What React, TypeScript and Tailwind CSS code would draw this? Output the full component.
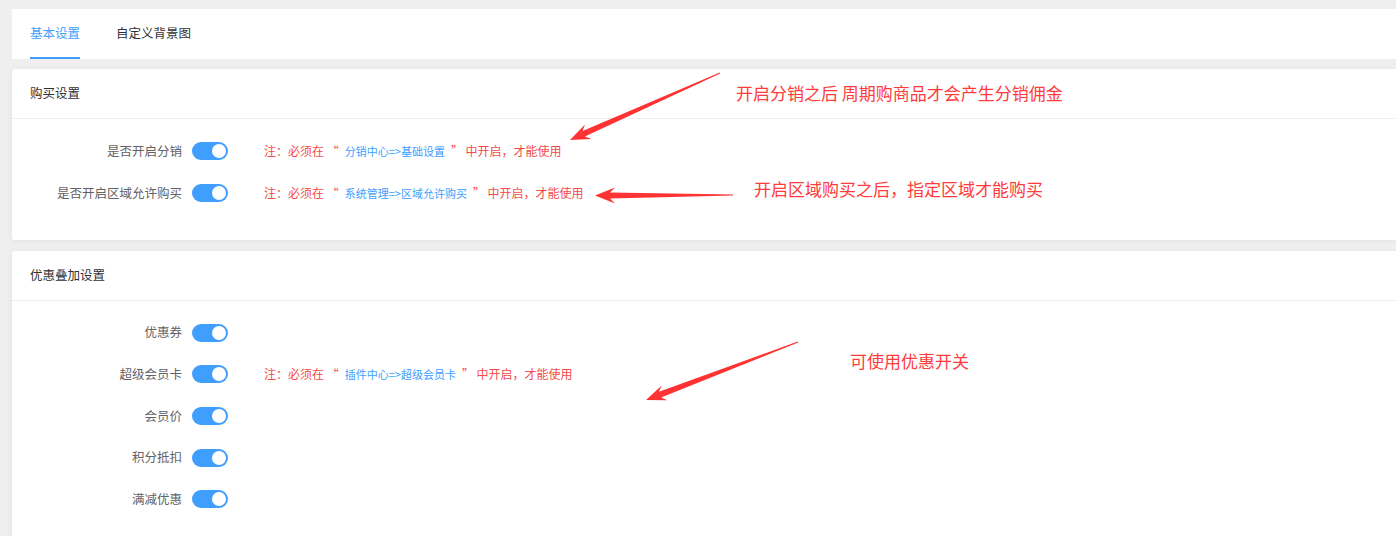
import React from "react";

const FONT = { fontFamily: '"Noto Sans CJK SC", "Noto Sans", sans-serif' };

type Pt = [number, number];

// tapered red arrow like a screenshot-tool annotation
function arrowPoints(tail: Pt, tip: Pt) {
  const dx = tip[0] - tail[0];
  const dy = tip[1] - tail[1];
  const len = Math.hypot(dx, dy);
  const ux = dx / len;
  const uy = dy / len;
  const nx = -uy;
  const ny = ux;
  const at = (s: number, w: number): string =>
    `${(tail[0] + ux * s + nx * w).toFixed(1)},${(tail[1] + uy * s + ny * w).toFixed(1)}`;
  return [
    at(0, 0.6),
    at(len - 15, 3),
    at(len - 20, 8),
    at(len, 0),
    at(len - 20, -8),
    at(len - 15, -3),
    at(0, -0.6),
  ].join(" ");
}

const Switch = () => (
  <div className="w-[36px] h-[18px] rounded-full bg-[#409eff] flex items-center justify-end pr-[2px] shrink-0">
    <div className="w-[14px] h-[14px] rounded-full bg-white" />
  </div>
);

const Note = ({ path }: { path: string }) => (
  <div className="ml-[36px] text-[12px] text-[#f54a4a] whitespace-nowrap flex items-center">
    <span>注：必须在 “</span>
    <span className="text-[11px] text-[#409eff] mx-[6px]">{path}</span>
    <span>” 中开启，才能使用</span>
  </div>
);

const Row = ({ label, note, h }: { label: string; note?: string; h: string }) => (
  <div className={h + " flex items-center"}>
    <div className="w-[180px] pr-[10px] text-right text-[12.5px] text-[#606266]">{label}</div>
    <Switch />
    {note && <Note path={note} />}
  </div>
);

const Card = ({ title, children, className }: { title: string; children: React.ReactNode; className?: string }) => (
  <div className={"bg-white rounded-l-[3px] shadow-[0_1px_6px_rgba(0,0,0,0.06)] " + (className ?? "")}>
    <div className="h-[50px] flex items-center px-[18px] text-[12.5px] text-[#303133] border-b border-[#ebeef5]">
      {title}
    </div>
    {children}
  </div>
);

export default function App() {
  return (
    <div className="relative w-[1396px] h-[536px] overflow-hidden bg-[#efeff0] pl-[12px] pt-[9px]" style={FONT}>
      {/* tabs */}
      <div className="bg-white h-[50px] flex items-end gap-[36px] pl-[18px]">
        <div className="h-full flex items-center text-[12.5px] text-[#409eff] border-b-2 border-[#409eff]">基本设置</div>
        <div className="h-full flex items-center text-[12.5px] text-[#303133] border-b-2 border-transparent">自定义背景图</div>
      </div>

      <Card title="购买设置" className="mt-[10px] h-[171px]">
        <div className="pt-[11px]">
          <Row h="h-[42px]" label="是否开启分销" note="分销中心=>基础设置" />
          <Row h="h-[42px]" label="是否开启区域允许购买" note="系统管理=>区域允许购买" />
        </div>
      </Card>

      <Card title="优惠叠加设置" className="mt-[11px] h-[300px]">
        <div className="pt-[11px] flex flex-col">
          <Row h="h-[41.6px]" label="优惠券" />
          <Row h="h-[41.6px]" label="超级会员卡" note="插件中心=>超级会员卡" />
          <Row h="h-[41.6px]" label="会员价" />
          <Row h="h-[41.6px]" label="积分抵扣" />
          <Row h="h-[41.6px]" label="满减优惠" />
        </div>
      </Card>

      {/* annotations over the page */}
      <svg className="absolute left-0 top-0 pointer-events-none" width="1396" height="536">
        <polygon points={arrowPoints([720, 73], [570, 140])} fill="#ff3333" />
        <polygon points={arrowPoints([733, 195], [595, 195.5])} fill="#ff3333" />
        <polygon points={arrowPoints([798, 342], [646, 400])} fill="#ff3333" />
      </svg>
      <div className="absolute left-[736px] top-[81px] text-[17px] leading-[24px] text-[#ff3b3b] whitespace-nowrap">
        开启分销之后 周期购商品才会产生分销佣金
      </div>
      <div className="absolute left-[754px] top-[177px] text-[17px] leading-[24px] text-[#ff3b3b] whitespace-nowrap">
        开启区域购买之后，指定区域才能购买
      </div>
      <div className="absolute left-[850px] top-[349px] text-[17px] leading-[24px] text-[#ff3b3b] whitespace-nowrap">
        可使用优惠开关
      </div>
    </div>
  );
}
